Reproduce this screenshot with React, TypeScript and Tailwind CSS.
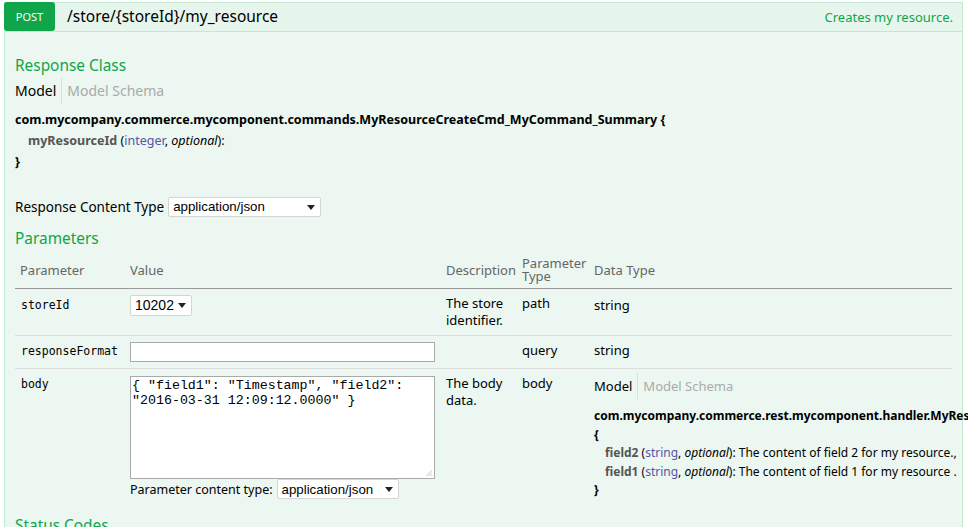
import React from "react";

// swagger-ui style POST operation, expanded
const sans = "font-['Noto_Sans','Open_Sans',sans-serif]";
const mono = "font-['DejaVu_Sans_Mono',monospace]";

function FakeSelect({ value, className }: { value: string; className: string }) {
  return (
    <div
      className={`flex h-[20px] items-center justify-between rounded-[2px] border border-[#d4d4d4] bg-white pl-[4px] pr-[5px] font-['Liberation_Sans',Arial,sans-serif] text-[13.3px] text-black ${className}`}
    >
      <span>{value}</span>
      <svg width="8" height="5" viewBox="0 0 8 5">
        <path d="M0 0 L8 0 L4 5 Z" fill="#222" />
      </svg>
    </div>
  );
}

function ModelTabs({ size }: { size: string }) {
  return (
    <div className={`flex items-stretch leading-[26px] ${size}`}>
      <span className="pr-[5px] text-black">Model</span>
      <span className="border-l border-[#ddd] pl-[5px] text-[#aaa]">Model Schema</span>
    </div>
  );
}

export default function App() {
  return (
    <div className={`w-[968px] h-[527px] overflow-hidden bg-white pl-[4px] pt-[2px] ${sans}`}>
      <div className="w-[959px]">
        {/* heading */}
        <div className="flex h-[30px] items-start border border-[#c3e8d1] bg-[#e7f6ec]">
          <span className="-ml-px -mt-px flex h-[29px] w-[51px] items-center justify-center rounded-[3px] bg-[#10a54a] pt-[2px] text-[11px] text-white">
            POST
          </span>
          <span className="ml-[12px] mt-[3px] text-[15.5px] leading-[20px] text-black">/store/{"{storeId}"}/my_resource</span>
          <span className="ml-auto mr-[9px] mt-[5px] text-[13px] leading-[18px] text-[#10a54a]">Creates my resource.</span>
        </div>

        {/* content */}
        <div className="h-[520px] border border-t-0 border-[#c3e8d1] bg-[#ebf7f0] px-[10px] pt-[23px]">
          <h4 className="text-[15.4px] leading-[22px] text-[#10a54a]">Response Class</h4>
          <div className="mt-[1px]">
            <ModelTabs size="text-[14px]" />
          </div>
          <div className="mt-[5px] text-[12.5px] leading-[21px] text-black">
            <div className="font-bold">com.mycompany.commerce.mycomponent.commands.MyResourceCreateCmd_MyCommand_Summary {"{"}</div>
            <div className="pl-[13px]">
              <span className="font-bold text-[#555]">myResourceId</span> (<span className="text-[#55a]">integer</span>,{" "}
              <span className="italic">optional</span>):
            </div>
            <div className="font-bold">{"}"}</div>
          </div>

          <div className="mt-[25px] flex items-center gap-[4px] text-[13.5px] text-black">
            <span>Response Content Type</span>
            <FakeSelect value="application/json" className="w-[153px]" />
          </div>

          <h4 className="mt-[11px] text-[15.4px] leading-[22px] text-[#10a54a]">Parameters</h4>

          <table className="mt-[2px] w-full table-fixed border-collapse text-[13px] text-black">
            <colgroup>
              <col className="w-[110px]" />
              <col className="w-[316px]" />
              <col className="w-[76px]" />
              <col className="w-[72px]" />
              <col />
            </colgroup>
            <thead>
              <tr className="border-b border-[#999] text-left text-[#666]">
                <th className="px-[5px] py-[5px] align-middle font-normal leading-[13px]">Parameter</th>
                <th className="px-[5px] py-[5px] align-middle font-normal leading-[13px]">Value</th>
                <th className="px-[5px] py-[5px] align-middle font-normal leading-[13px]">Description</th>
                <th className="px-[5px] py-[5px] align-middle font-normal leading-[13px]">Parameter Type</th>
                <th className="px-[5px] py-[5px] align-middle font-normal leading-[13px]">Data Type</th>
              </tr>
            </thead>
            <tbody>
              <tr className="border-b border-[#ddd] align-top leading-[17px]">
                <td className={`pl-[6px] pt-[8px] text-[11.5px] ${mono}`}>storeId</td>
                <td className="px-[5px] py-[6px]">
                  <FakeSelect value="10202" className="h-[21px] w-[62px] text-[14px]" />
                </td>
                <td className="px-[5px] py-[6px]">The store identifier.</td>
                <td className="px-[5px] py-[6px]">path</td>
                <td className="px-[5px] py-[8px]">string</td>
              </tr>
              <tr className="border-b border-[#ddd] align-top leading-[17px]">
                <td className={`pl-[6px] pt-[7px] text-[11.5px] ${mono}`}>responseFormat</td>
                <td className="px-[5px] py-[6px]">
                  <div className="h-[20px] w-[305px] border border-[#aaa] bg-white" />
                </td>
                <td className="px-[5px] py-[6px]" />
                <td className="px-[5px] py-[6px]">query</td>
                <td className="px-[5px] py-[6px]">string</td>
              </tr>
              <tr className="align-top leading-[17px]">
                <td className={`pl-[6px] pt-[7px] text-[11.5px] ${mono}`}>body</td>
                <td className="px-[5px] pt-[7px]">
                  <div className="relative h-[103px] w-[305px] border border-[#aaa] bg-white px-[1px] py-[1px] font-['Liberation_Mono',monospace] text-[13.3px] leading-[15px]">
                    {'{ "field1": "Timestamp", "field2":'}
                    <br />
                    {'"2016-03-31 12:09:12.0000" }'}
                    <svg className="absolute bottom-[2px] right-[2px]" width="7" height="7" viewBox="0 0 7 7">
                      <circle cx="6" cy="2" r="0.6" fill="#999" />
                      <circle cx="4" cy="4" r="0.6" fill="#999" />
                      <circle cx="6" cy="4" r="0.6" fill="#999" />
                      <circle cx="2" cy="6" r="0.6" fill="#999" />
                      <circle cx="4" cy="6" r="0.6" fill="#999" />
                      <circle cx="6" cy="6" r="0.6" fill="#999" />
                    </svg>
                  </div>
                  <div className="flex items-center gap-[4px] whitespace-nowrap text-[12.5px]">
                    <span>Parameter content type:</span>
                    <FakeSelect value="application/json" className="h-[19px] w-[122px]" />
                  </div>
                </td>
                <td className="px-[5px] py-[6px]">The body data.</td>
                <td className="px-[5px] py-[6px]">body</td>
                <td className="px-[5px] pt-[4px]">
                  <ModelTabs size="text-[13px]" />
                  <div className="mt-[8px] whitespace-nowrap text-[12px] leading-[18.5px]">
                    <div className="font-bold">com.mycompany.commerce.rest.mycomponent.handler.MyResourceCreateHandler_MyResourceBody {"{"}</div>
                    <div className="font-bold">{"{"}</div>
                    <div className="pl-[11px]">
                      <span className="font-bold text-[#555]">field2</span> (<span className="text-[#55a]">string</span>,{" "}
                      <span className="italic">optional</span>): The content of field 2 for my resource.,
                    </div>
                    <div className="pl-[11px]">
                      <span className="font-bold text-[#555]">field1</span> (<span className="text-[#55a]">string</span>,{" "}
                      <span className="italic">optional</span>): The content of field 1 for my resource .
                    </div>
                    <div className="font-bold">{"}"}</div>
                  </div>
                </td>
              </tr>
            </tbody>
          </table>

          <h4 className="mt-[15px] text-[15.4px] leading-[22px] text-[#10a54a]">Status Codes</h4>
        </div>
      </div>
    </div>
  );
}
